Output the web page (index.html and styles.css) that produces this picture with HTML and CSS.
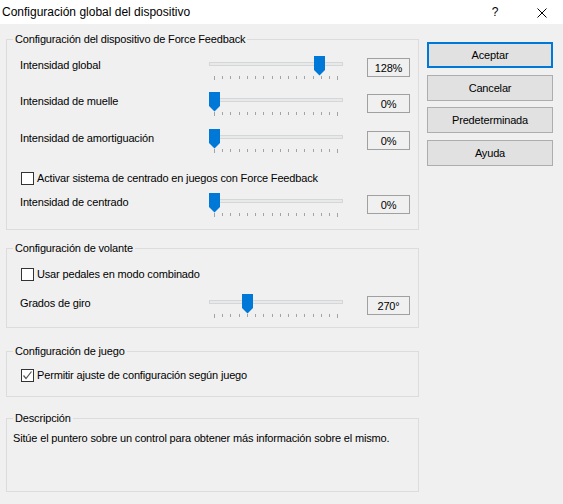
FILE: index.html
```html
<!DOCTYPE html>
<html lang="es">
<head>
<meta charset="utf-8">
<title>Configuración global del dispositivo</title>
<link rel="stylesheet" href="styles.css">
</head>
<body>
<svg class="defs" width="0" height="0" aria-hidden="true">
  <defs>
    <g id="track">
      <rect x="0.5" y="6.5" width="133" height="3" fill="#e7eaea" stroke="#d6d6d6"/>
      <path d="M5.5 20v4M13.5 20v3M21.5 20v3M30.5 20v3M38.5 20v3M46.5 20v3M54.5 20v3M63.5 20v3M71.5 20v3M79.5 20v3M87.5 20v3M95.5 20v3M104.5 20v3M112.5 20v3M120.5 20v3M128.5 20v4" stroke="#a3a3a3" stroke-width="1"/>
    </g>
    <path id="thumb" d="M0 0H11V14L5.5 19.5L0 14Z" fill="#0078d7"/>
  </defs>
</svg>
<div class="window">
  <div class="titlebar">
    <span class="title">Configuración global del dispositivo</span>
    <span class="help">?</span>
    <svg class="close" width="10" height="10" viewBox="0 0 10 10"><path d="M0.5 0.5L9.5 9.5M9.5 0.5L0.5 9.5" stroke="#000" stroke-width="1"/></svg>
  </div>
  <div class="content">
    <div class="groups">
      <fieldset class="group g1">
        <legend>Configuración del dispositivo de Force Feedback</legend>
        <div class="inner">
          <div class="row">
            <span class="label">Intensidad global</span>
            <svg class="slider" width="134" height="24"><use href="#track"/><use href="#thumb" transform="translate(105 0)"/></svg>
            <span class="value">128%</span>
          </div>
          <div class="row mt12">
            <span class="label">Intensidad de muelle</span>
            <svg class="slider" width="134" height="24"><use href="#track"/><use href="#thumb" transform="translate(0 0)"/></svg>
            <span class="value">0%</span>
          </div>
          <div class="row mt13">
            <span class="label">Intensidad de amortiguación</span>
            <svg class="slider" width="134" height="24"><use href="#track"/><use href="#thumb" transform="translate(0 0)"/></svg>
            <span class="value">0%</span>
          </div>
          <div class="check mt19">
            <span class="box"></span>
            <span class="check-label">Activar sistema de centrado en juegos con Force Feedback</span>
          </div>
          <div class="row mt8">
            <span class="label">Intensidad de centrado</span>
            <svg class="slider" width="134" height="24"><use href="#track"/><use href="#thumb" transform="translate(0 0)"/></svg>
            <span class="value">0%</span>
          </div>
        </div>
      </fieldset>
      <fieldset class="group g2">
        <legend>Configuración de volante</legend>
        <div class="inner">
          <div class="check">
            <span class="box"></span>
            <span class="check-label">Usar pedales en modo combinado</span>
          </div>
          <div class="row mt13">
            <span class="label">Grados de giro</span>
            <svg class="slider" width="134" height="24"><use href="#track"/><use href="#thumb" transform="translate(33 0)"/></svg>
            <span class="value">270°</span>
          </div>
        </div>
      </fieldset>
      <fieldset class="group g3">
        <legend>Configuración de juego</legend>
        <div class="inner">
          <div class="check">
            <span class="box checked"><svg width="11" height="11" viewBox="0 0 11 11"><path d="M1.5 5.5L4 8.5L9.5 1.5" fill="none" stroke="#555" stroke-width="1.2"/></svg></span>
            <span class="check-label">Permitir ajuste de configuración según juego</span>
          </div>
        </div>
      </fieldset>
      <fieldset class="group g4">
        <legend>Descripción</legend>
        <div class="inner">
          <p class="desc">Sitúe el puntero sobre un control para obtener más información sobre el mismo.</p>
        </div>
      </fieldset>
    </div>
    <div class="buttons">
      <button class="btn default">Aceptar</button>
      <button class="btn">Cancelar</button>
      <button class="btn">Predeterminada</button>
      <button class="btn">Ayuda</button>
    </div>
  </div>
</div>
</body>
</html>
```
FILE: styles.css
```css
html, body {
  margin: 0;
  padding: 0;
  background: #f0f0f0;
}
.defs {
  position: absolute;
  width: 0;
  height: 0;
  overflow: hidden;
}
.window {
  width: 563px;
  height: 504px;
  background: #f0f0f0;
  font-family: "Liberation Sans", Arial, sans-serif;
  font-size: 11px;
  letter-spacing: -0.16px;
  color: #000;
  overflow: hidden;
}
.titlebar {
  height: 24px;
  background: #fff;
  display: flex;
  align-items: flex-start;
  letter-spacing: 0;
}
.title {
  flex: 1;
  padding-left: 2px;
  padding-top: 1px;
  line-height: 23px;
  font-size: 12px;
  white-space: nowrap;
}
.help {
  width: 16px;
  text-align: center;
  padding-top: 1px;
  line-height: 23px;
  font-size: 12px;
}
.close {
  display: block;
  margin: 8px 16px 0 34px;
}
.content {
  display: flex;
  padding-left: 6px;
}
.groups {
  width: 413px;
  display: flex;
  flex-direction: column;
}
.group {
  margin: 0;
  padding: 0;
  border: 1px solid #dcdcdc;
  min-width: 0;
}
.group legend {
  margin-left: 6px;
  padding: 0 2px;
  line-height: 13px;
  font-size: 11px;
}
.g1 { margin-top: 9px; }
.g1 .inner { padding: 10px 8px 12px 13px; }
.g2 { margin-top: 12px; }
.g2 .inner { padding: 13px 8px 9px 13px; }
.g3 { margin-top: 17px; }
.g3 .inner { padding: 11px 8px 14px 13px; }
.g4 { margin-top: 15px; }
.g4 .inner { padding: 7px 6px 46px 6px; }

.mt8 { margin-top: 8px; }
.mt12 { margin-top: 12px; }
.mt13 { margin-top: 13px; }
.mt19 { margin-top: 19px; }

.row {
  display: flex;
  align-items: flex-start;
  height: 24px;
}
.label {
  width: 189px;
  margin-top: 3px;
  line-height: 13px;
  white-space: nowrap;
}
.slider {
  display: block;
  flex: none;
}
.value {
  box-sizing: border-box;
  width: 43px;
  height: 19px;
  margin-top: 2px;
  margin-left: 24px;
  border: 1px solid #a0a0a0;
  padding-top: 1px;
  line-height: 16px;
  text-align: center;
}
.check {
  display: flex;
  align-items: flex-start;
  margin-left: 1px;
}
.box {
  box-sizing: border-box;
  width: 13px;
  height: 13px;
  border: 1px solid #333;
  background: #fff;
  margin-right: 3px;
  flex: none;
}
.box svg {
  display: block;
}
.check-label {
  line-height: 13px;
  white-space: nowrap;
}
.desc {
  margin: 0;
  line-height: 13px;
}
.buttons {
  width: 126px;
  margin-left: 8px;
  padding-top: 18px;
  display: flex;
  flex-direction: column;
  gap: 6.6px;
}
.btn {
  box-sizing: border-box;
  height: 26px;
  margin: 0;
  padding: 0;
  background: #e1e1e1;
  border: 1px solid #adadad;
  font-family: "Liberation Sans", Arial, sans-serif;
  font-size: 11px;
  letter-spacing: -0.16px;
  color: #000;
}
.btn.default {
  border: 2px solid #0078d7;
}
```
